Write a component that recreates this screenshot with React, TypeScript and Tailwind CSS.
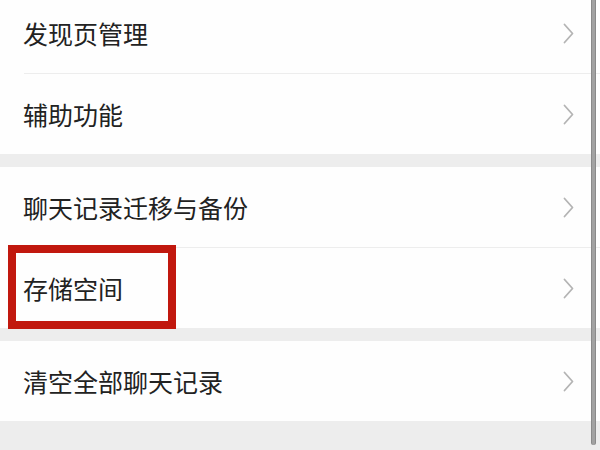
import React from 'react'

const font = { fontFamily: '"Noto Sans CJK SC", "Noto Sans", sans-serif' }

function Chevron() {
  return (
    <svg width="11" height="21" viewBox="0 0 11 21" fill="none" className="shrink-0">
      <path d="M1.5 1.5 L9.5 10.5 L1.5 19.5" stroke="#b4b4b4" strokeWidth="1.8" strokeLinecap="round" strokeLinejoin="round" />
    </svg>
  )
}

function Row({ label, divider, children }: { label: string; divider?: boolean; children?: React.ReactNode }) {
  return (
    <div className="relative bg-[#fefefe]">
      <div className="flex h-[80px] items-center justify-between pl-[23px] pr-[26px]">
        <span className="text-[25px] leading-none text-[#222222]">{label}</span>
        <Chevron />
      </div>
      {divider && <div className="ml-[24px] h-px bg-[#ededed]" />}
      {children}
    </div>
  )
}

export default function App() {
  return (
    <div className="relative h-[450px] w-[600px] overflow-hidden bg-[#ededed]" style={font}>
      <div className="-mt-[7px] flex flex-col">
        <Row label="发现页管理" divider />
        <Row label="辅助功能" />
        <div className="h-[13px]" />
        <Row label="聊天记录迁移与备份" divider />
        <Row label="存储空间">
          <div className="absolute left-[8px] top-[-3px] h-[84px] w-[168px] border-[8px] border-[#c1180e]" />
        </Row>
        <div className="h-[13px]" />
        <Row label="清空全部聊天记录" />
      </div>
      <div className="absolute left-[591px] top-0 z-10 h-[445px] w-[5px] rounded-b-[3px] border-x border-[#8a8a8a] bg-[#a2a2a2]" />
    </div>
  )
}
